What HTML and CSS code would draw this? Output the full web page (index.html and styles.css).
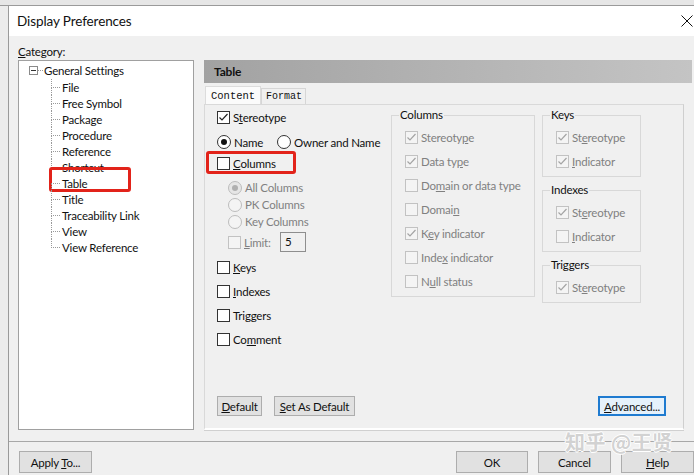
FILE: index.html
```html
<!DOCTYPE html>
<html>
<head>
<meta charset="utf-8">
<link rel="stylesheet" href="styles.css">
</head>
<body>
<div class="topstrip"></div>
<div class="dialog">
  <div class="titlebar">
    <span class="title">Display Preferences</span>
    <svg class="close" width="12" height="12" viewBox="0 0 12 12"><path d="M0.5 0.5L11.5 11.5M11.5 0.5L0.5 11.5" stroke="#111" stroke-width="1" fill="none"/></svg>
  </div>
  <div class="main">
    <div class="left">
      <div class="cat-label"><u>C</u>ategory:</div>
      <div class="tree">
        <div class="root"><span class="minus"></span><span class="hdots"></span><span>General Settings</span></div>
        <ul class="children">
          <li>File</li>
          <li>Free Symbol</li>
          <li>Package</li>
          <li>Procedure</li>
          <li>Reference</li>
          <li>Shortcut</li>
          <li>Table<span class="hl hl-table"></span></li>
          <li>Title</li>
          <li>Traceability Link</li>
          <li>View</li>
          <li>View Reference</li>
        </ul>
      </div>
    </div>
    <div class="right">
      <div class="header">Table</div>
      <div class="tabs">
        <div class="tab active">Content</div>
        <div class="tab">Format</div>
      </div>
      <div class="panel">
        <div class="panel-top">
          <div class="opts">
            <div class="row r20"><span class="cb"><svg viewBox="0 0 11 11"><path d="M1.5 5.5L4 8L9.5 2"/></svg></span><span>S<u>t</u>ereotype</span></div>
            <div class="row r20 radios">
              <span class="rb on"></span><span>Name</span>
              <span class="rb second"></span><span>Owner and Name</span>
            </div>
            <div class="row r20 colrow"><span class="cb"></span><span><u>C</u>olumns</span><span class="hl hl-cols"></span></div>
            <div class="row r17 ind dis first17"><span class="rb on"></span><span>All Columns</span></div>
            <div class="row r17 ind dis"><span class="rb"></span><span>PK Columns</span></div>
            <div class="row r17 ind dis"><span class="rb"></span><span>Key Columns</span></div>
            <div class="row r20 ind dis limit"><span class="cb"></span><span class="lim"><u>L</u>imit:</span><span class="num">5</span></div>
            <div class="row r24 keys"><span class="cb"></span><span><u>K</u>eys</span></div>
            <div class="row r24"><span class="cb"></span><span><u>I</u>ndexes</span></div>
            <div class="row r24"><span class="cb"></span><span>Tri<u>g</u>gers</span></div>
            <div class="row r24"><span class="cb"></span><span>Co<u>m</u>ment</span></div>
          </div>
          <fieldset class="grp cols">
            <legend>Columns</legend>
            <div class="row r24 dis"><span class="cb"><svg viewBox="0 0 11 11"><path d="M1.5 5.5L4 8L9.5 2"/></svg></span><span>Stereoty<u>p</u>e</span></div>
            <div class="row r24 dis"><span class="cb"><svg viewBox="0 0 11 11"><path d="M1.5 5.5L4 8L9.5 2"/></svg></span><span>Data ty<u>p</u>e</span></div>
            <div class="row r24 dis"><span class="cb"></span><span>Do<u>m</u>ain or data type</span></div>
            <div class="row r24 dis"><span class="cb"></span><span>Domai<u>n</u></span></div>
            <div class="row r24 dis"><span class="cb"><svg viewBox="0 0 11 11"><path d="M1.5 5.5L4 8L9.5 2"/></svg></span><span>K<u>e</u>y indicator</span></div>
            <div class="row r24 dis"><span class="cb"></span><span>Inde<u>x</u> indicator</span></div>
            <div class="row r24 dis"><span class="cb"></span><span>N<u>u</u>ll status</span></div>
          </fieldset>
          <div class="side">
            <fieldset class="grp small">
              <legend>Keys</legend>
              <div class="row r24 dis"><span class="cb"><svg viewBox="0 0 11 11"><path d="M1.5 5.5L4 8L9.5 2"/></svg></span><span>St<u>e</u>reotype</span></div>
              <div class="row r24 dis"><span class="cb"><svg viewBox="0 0 11 11"><path d="M1.5 5.5L4 8L9.5 2"/></svg></span><span><u>I</u>ndicator</span></div>
            </fieldset>
            <fieldset class="grp small">
              <legend>Indexes</legend>
              <div class="row r24 dis"><span class="cb"><svg viewBox="0 0 11 11"><path d="M1.5 5.5L4 8L9.5 2"/></svg></span><span>St<u>e</u>reotype</span></div>
              <div class="row r24 dis"><span class="cb"></span><span><u>I</u>ndicator</span></div>
            </fieldset>
            <fieldset class="grp small">
              <legend>Triggers</legend>
              <div class="row r24 dis"><span class="cb"><svg viewBox="0 0 11 11"><path d="M1.5 5.5L4 8L9.5 2"/></svg></span><span>St<u>e</u>reotype</span></div>
            </fieldset>
          </div>
        </div>
        <div class="panel-btns">
          <button class="btn b-def"><u>D</u>efault</button>
          <button class="btn b-set"><u>S</u>et As Default</button>
          <button class="btn b-adv"><u>A</u>dvanced...</button>
        </div>
      </div>
    </div>
  </div>
  <div class="sep"></div>
  <div class="footer">
    <button class="btn b-apply">Apply <u>T</u>o...</button>
    <div class="fgroup">
      <button class="btn b-ok">OK</button>
      <button class="btn b-cancel">Cancel</button>
      <button class="btn b-help"><u>H</u>elp</button>
    </div>
  </div>
  <div class="watermark">知乎 @王贤</div>
</div>
</body>
</html>
```
FILE: styles.css
```css
* { box-sizing: border-box; }
html, body { margin: 0; padding: 0; }
body {
  width: 694px;
  height: 475px;
  overflow: hidden;
  background: #ececec;
  font-family: "Lato", "Liberation Sans", sans-serif;
  font-size: 11.5px;
  letter-spacing: -0.2px;
  color: #111;
  position: relative;
}
u { text-decoration: underline; text-underline-offset: 1px; }
.topstrip {
  height: 6px;
  border-bottom: 1px solid #9a9a9a;
  background: #e6e6e6;
}
.dialog {
  margin-left: 8px;
  border-left: 1px solid #9a9a9a;
  background: #f0f0f0;
  height: 469px;
  position: relative;
}
.titlebar {
  height: 30px;
  background: #fff;
  display: flex;
  align-items: center;
  justify-content: space-between;
  padding: 0 1px 0 8px;
}
.title { font-size: 13.5px; letter-spacing: -0.1px; color: #111; }
.close { display: block; }

.main { display: flex; padding-left: 9px; gap: 10px; }
.left { width: 176px; }
.cat-label { height: 16px; margin-top: 8px; line-height: 15px; }
.tree {
  height: 370px;
  background: #fff;
  border: 1px solid #a0a0a0;
  padding-top: 1px;
}
.root {
  display: flex;
  align-items: center;
  height: 16px;
  padding-left: 10px;
}
.minus {
  width: 9px; height: 9px;
  border: 1px solid #8a8a8a;
  position: relative;
  background: #fff;
}
.minus::after {
  content: "";
  position: absolute;
  left: 1px; right: 1px; top: 3px;
  border-top: 1px solid #333;
}
.hdots { width: 5px; margin-right: 1px; border-top: 1px dotted #999; }
.children { list-style: none; margin: 1px 0 0 0; padding: 0 0 0 32px; }
.children li {
  position: relative;
  height: 16px;
  line-height: 17px;
  padding-left: 11px;
}
.children li::before {
  content: "";
  position: absolute;
  left: 0; top: 0;
  width: 8px; height: 8px;
  border-left: 1px dotted #999;
  border-bottom: 1px dotted #999;
}
.children li:not(:last-child)::after {
  content: "";
  position: absolute;
  left: 0; top: 8px; bottom: 0;
  border-left: 1px dotted #999;
}
.hl {
  position: absolute;
  border: 3px solid #e2231a;
  border-radius: 3px;
  pointer-events: none;
}
.hl-table { left: -2px; top: -8px; width: 82px; height: 25px; }

.right { width: 488px; }
.header {
  margin-top: 24px;
  height: 23px;
  line-height: 23px;
  padding-left: 10px;
  font-weight: bold;
  font-size: 12px;
  background: linear-gradient(to right, #a2a2a2, #c4c4c4);
  color: #111;
}
.tabs { display: flex; align-items: flex-end; margin-top: 3px; height: 18px; padding-left: 1px; }
.tab {
  font-family: "Liberation Mono", monospace;
  font-size: 10px;
  letter-spacing: 0;
  height: 16px;
  line-height: 15px;
  padding: 0 3px 0 4px;
  border: 1px solid #d6d6d6;
  border-bottom: none;
  background: #f0f0f0;
}
.tab.active {
  height: 18px;
  line-height: 19px;
  background: #fbfbfb;
  border-color: #dcdcdc;
  padding: 0 5px 0 5px;
  font-size: 10.5px;
}
.panel {
  width: 480px;
  height: 326px;
  border: 1px solid #d9d9d9;
  border-right-color: #cfcfcf;
  border-bottom: 2px solid #ffffff;
  box-shadow: 0 1px 0 #d0d0d0;
  display: flex;
  flex-direction: column;
  justify-content: space-between;
}
.panel-top { display: flex; padding: 2px 0 0 12px; }
.opts { width: 174px; }
.row { display: flex; align-items: center; gap: 3px; white-space: nowrap; }
.r17 { height: 17px; }
.r20 { height: 20px; }
.r24 { height: 24px; }
.radios { margin-top: 5px; }
.radios .second { margin-left: 11px; }
.colrow { position: relative; margin-top: 1px; }
.hl-cols { left: -11px; top: -2px; width: 90px; height: 23px; }
.first17 { margin-top: 6px; }
.ind { padding-left: 11px; }
.limit { margin-top: 2px; }
.lim { width: 33px; }
.num {
  width: 26px; height: 20px;
  border: 1px solid #8e8e8e;
  color: #111;
  padding-left: 4px;
  line-height: 18px;
  background: #f0f0f0;
}
.keys { margin-top: 3px; }
.dis { color: #808080; }

.cb {
  width: 13px; height: 13px;
  border: 1px solid #333;
  background: #fff;
  flex: none;
  display: flex;
  align-items: center;
  justify-content: center;
}
.cb svg { width: 11px; height: 11px; display: block; }
.cb svg path { fill: none; stroke: #222; stroke-width: 1.2; }
.dis .cb { border-color: #c2c2c2; background: #f4f4f4; }
.dis .cb svg path { stroke: #a4a4a4; }
.rb {
  width: 14px; height: 14px;
  border: 1px solid #333;
  border-radius: 50%;
  background: #fff;
  flex: none;
  display: flex;
  align-items: center;
  justify-content: center;
}
.rb.on::after {
  content: "";
  width: 6px; height: 6px;
  border-radius: 50%;
  background: #111;
}
.dis .rb { border-color: #bcbcbc; background: #f4f4f4; }
.dis .rb.on { background: #e6e6e6; }
.dis .rb.on::after { background: #b0b0b0; }

.grp {
  margin: 1px 0 0 0;
  border: 1px solid #d8d8d8;
  padding: 3px 0 2px 13px;
  min-width: 0;
}
.grp legend {
  padding: 0 1px;
  margin-left: -6px;
  line-height: 14px;
  height: 14px;
  color: #111;
}
.cols { width: 144px; height: 189px; }
.side { width: 99px; margin-left: 7px; display: flex; flex-direction: column; gap: 5px; }
.small { padding-bottom: 3px; }

.panel-btns { display: flex; align-items: center; padding: 0 17px 12px 12px; gap: 12px; }
.btn {
  font-family: "Lato", "Liberation Sans", sans-serif;
  font-size: 11.5px;
  letter-spacing: -0.2px;
  color: #111;
  background: #e1e1e1;
  border: 1px solid #adadad;
  height: 20px;
  padding: 0;
  margin: 0;
}
.b-def { width: 45px; }
.b-set { width: 81px; }
.b-adv {
  margin-left: auto;
  width: 68px;
  border: 2px solid #1f7bd0;
  background: #e5f1fb;
}
.sep { margin-top: 11px; border-top: 1px solid #a8a8a8; }
.footer { display: flex; padding: 9px 0 0 10px; }
.footer .btn { height: 22px; }
.b-apply { width: 73px; }
.fgroup { margin-left: auto; display: flex; gap: 10px; }
.b-ok { width: 72px; }
.b-cancel { width: 73px; }
.b-help { width: 73px; }
.watermark {
  position: absolute;
  left: 556px;
  top: 421px;
  font-family: "Noto Sans CJK SC", sans-serif;
  font-size: 20px;
  font-weight: bold;
  letter-spacing: 0.5px;
  color: #d2d2d2;
  text-shadow: 1px 0 0 #fff, -1px 0 0 #fff, 0 1px 0 #fff, 0 -1px 0 #fff;
}
```
